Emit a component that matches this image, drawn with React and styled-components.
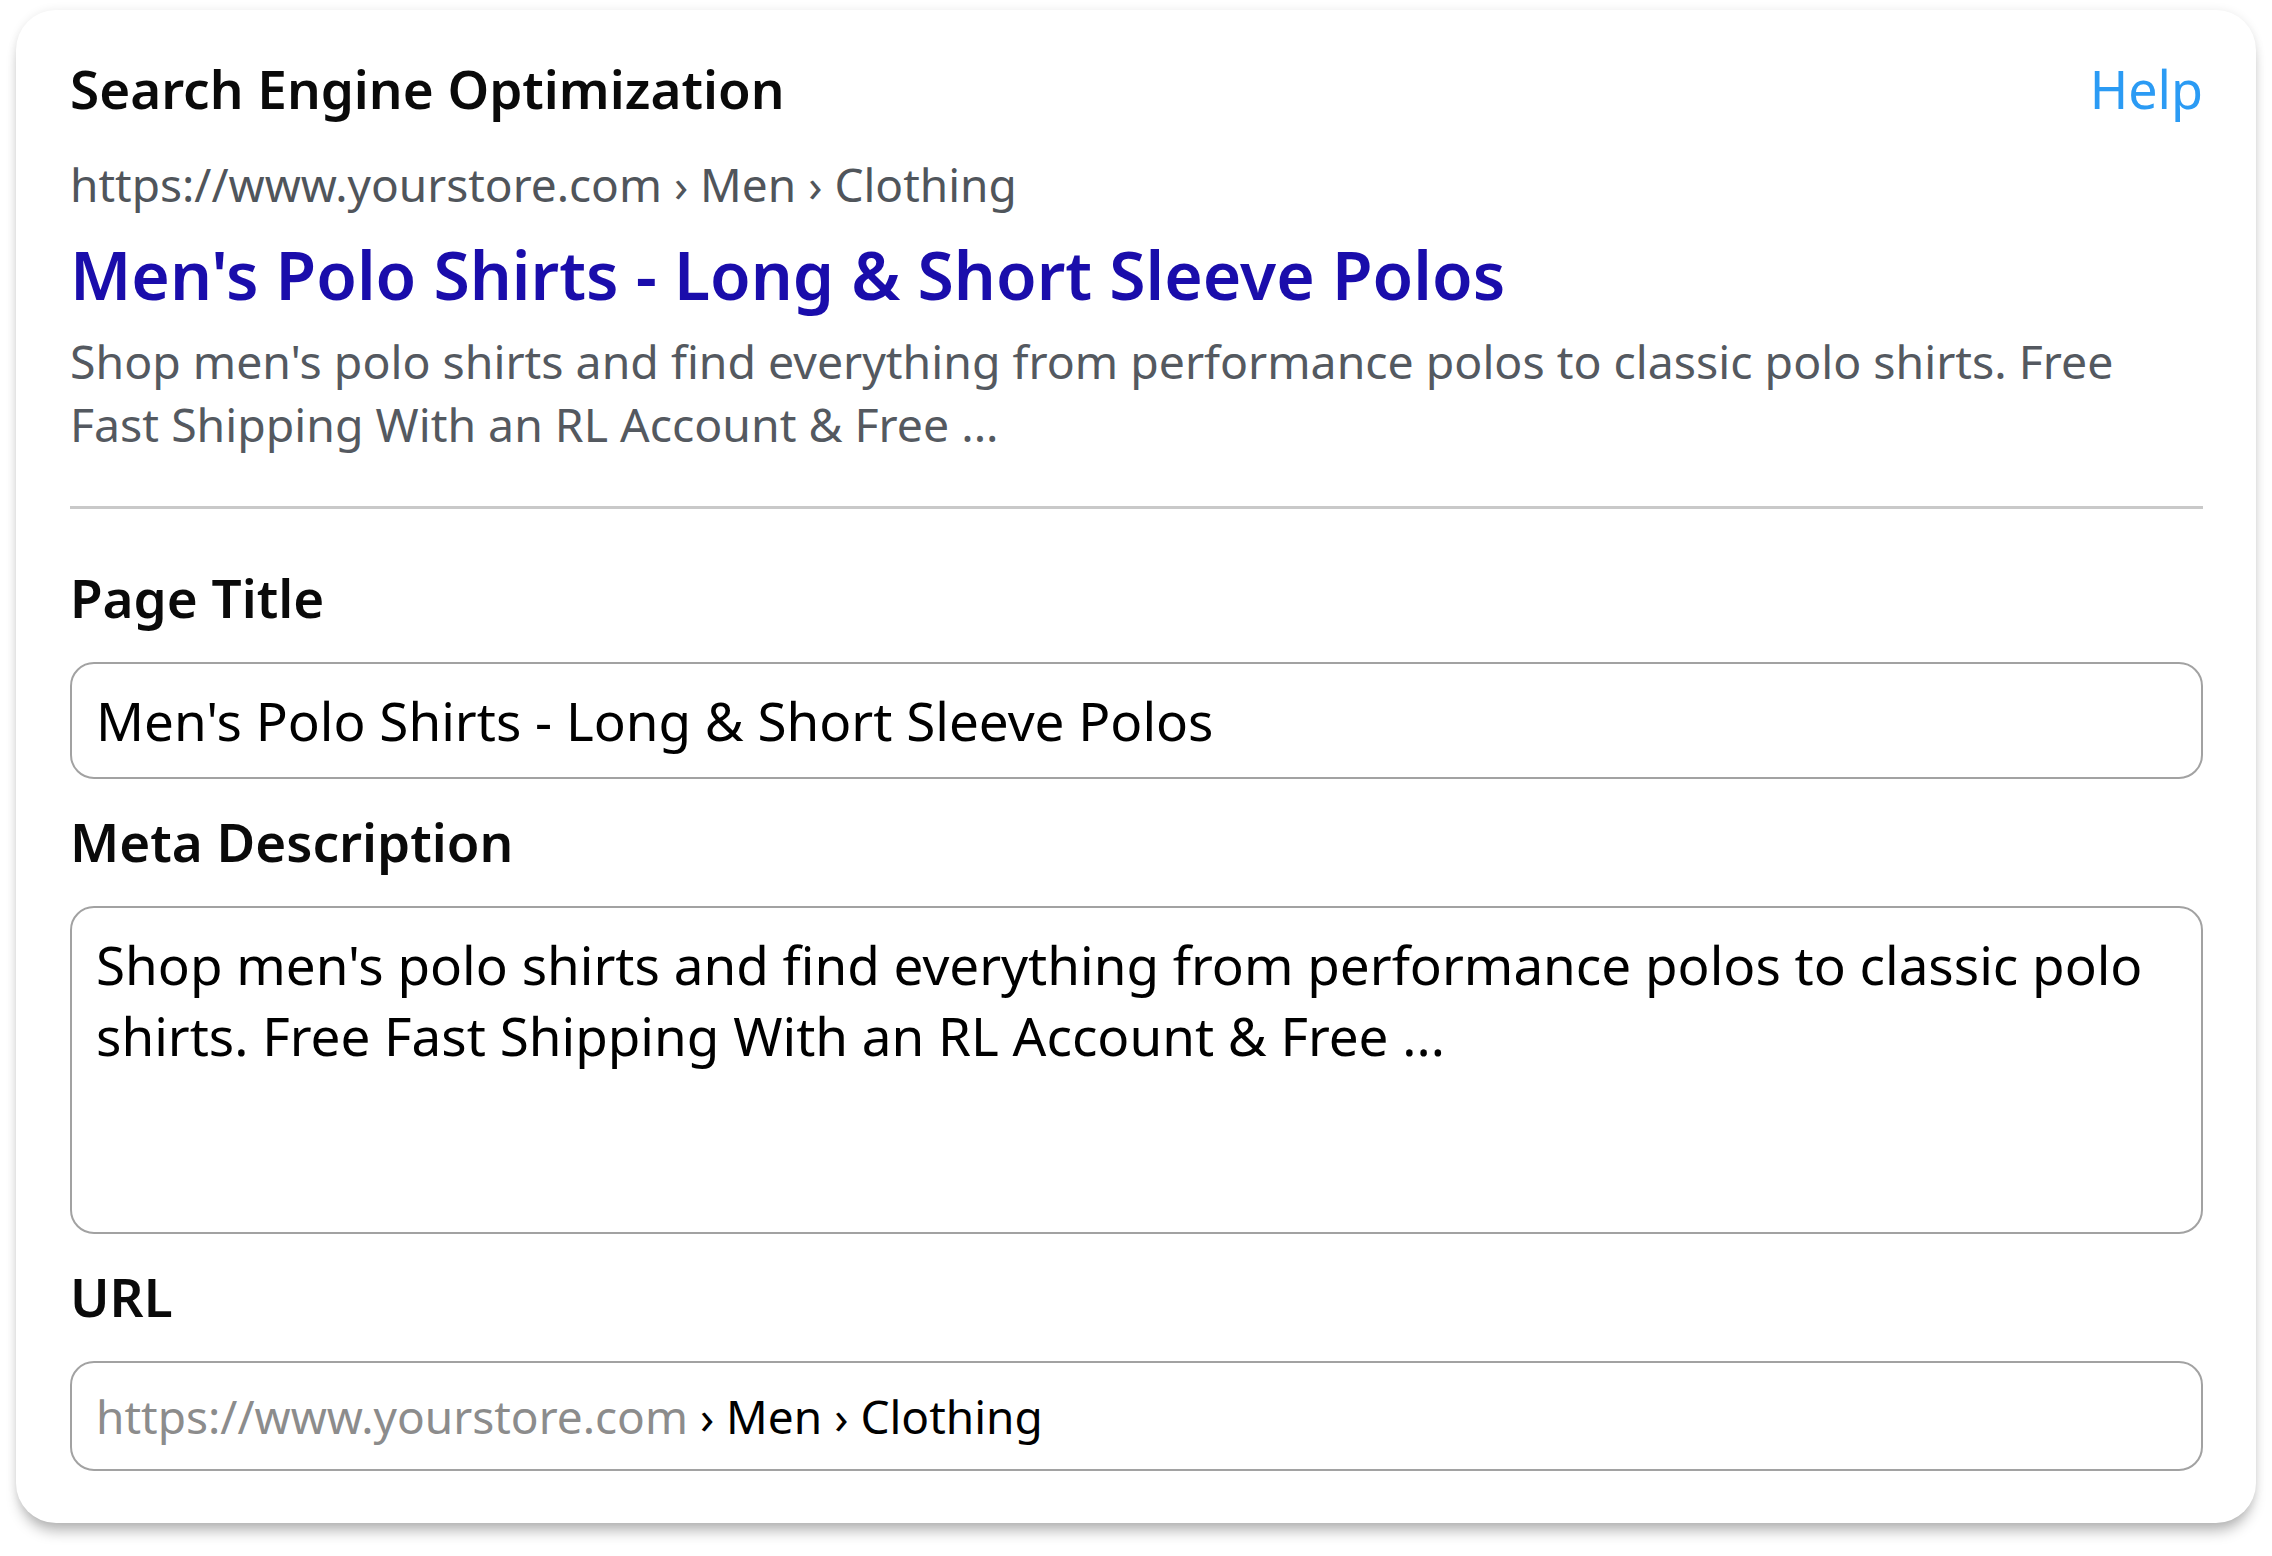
import styled, { createGlobalStyle } from 'styled-components';

const GlobalStyle = createGlobalStyle`
  html, body {
    margin: 0;
    padding: 0;
    background: #ffffff;
  }
  body {
    font-family: "Noto Sans", "Open Sans", sans-serif;
    color: #000;
  }
`;

const App = () => {
  return (
    <>
      <GlobalStyle />
      <Page>
        <Card>
          <Header>
            <Heading>Search Engine Optimization</Heading>
            <HelpLink href="#">Help</HelpLink>
          </Header>
          <Preview>
            <Crumbs>https://www.yourstore.com › Men › Clothing</Crumbs>
            <ResultTitle>Men's Polo Shirts - Long &amp; Short Sleeve Polos</ResultTitle>
            <ResultText>
              Shop men's polo shirts and find everything from performance polos to classic polo
              shirts. Free Fast Shipping With an RL Account &amp; Free ...
            </ResultText>
          </Preview>
          <Divider />
          <Fields>
            <Field>
              <Label>Page Title</Label>
              <TextInput
                type="text"
                readOnly
                value="Men's Polo Shirts - Long & Short Sleeve Polos"
              />
            </Field>
            <Field>
              <Label>Meta Description</Label>
              <TextArea
                readOnly
                value="Shop men's polo shirts and find everything from performance polos to classic polo shirts. Free Fast Shipping With an RL Account & Free ..."
              />
            </Field>
            <Field>
              <Label>URL</Label>
              <UrlBox>
                <Muted>https://www.yourstore.com</Muted> › Men › Clothing
              </UrlBox>
            </Field>
          </Fields>
        </Card>
      </Page>
    </>
  );
};
export default App;

const Page = styled.div`
  padding: 10px 16px 30px;
`;

const Card = styled.div`
  background: #fff;
  border-radius: 40px;
  padding: 42px 53px 52px 54px;
  box-shadow: 0 12px 14px -4px rgba(0, 0, 0, 0.28), 0 0 10px rgba(0, 0, 0, 0.08);
`;

const Header = styled.div`
  display: flex;
  justify-content: space-between;
  align-items: baseline;
`;

const Heading = styled.h2`
  margin: 0;
  font-size: 53px;
  font-weight: 600;
  line-height: normal;
  color: #0a0a0a;
`;

const HelpLink = styled.a`
  font-size: 52px;
  color: #2b9bf4;
  text-decoration: none;
`;

const Preview = styled.div`
  display: flex;
  flex-direction: column;
  margin-top: 28px;
`;

const Crumbs = styled.div`
  font-size: 46px;
  line-height: normal;
  color: #50555b;
`;

const ResultTitle = styled.div`
  margin-top: 14px;
  font-size: 66px;
  font-weight: 600;
  line-height: normal;
  color: #1a0dab;
`;

const ResultText = styled.p`
  margin: 11px 0 0;
  max-width: 2090px;
  font-size: 46.4px;
  line-height: 63px;
  color: #545960;
`;

const Divider = styled.hr`
  margin: 50px 0 0;
  border: 0;
  height: 3px;
  background: #c9c9c9;
`;

const Fields = styled.div`
  display: flex;
  flex-direction: column;
  gap: 26px;
  margin-top: 52px;
`;

const Field = styled.div`
  display: flex;
  flex-direction: column;
  gap: 28px;
`;

const Label = styled.label`
  font-size: 53px;
  font-weight: 600;
  line-height: normal;
  color: #0a0a0a;
`;

const fieldBox = `
  box-sizing: border-box;
  width: 100%;
  margin: 0;
  border: 2px solid #a2a2a2;
  border-radius: 24px;
  background: #fff;
  color: #000;
  font-family: "Noto Sans", "Open Sans", sans-serif;
  outline: none;
`;

const TextInput = styled.input`
  ${fieldBox}
  height: 117px;
  padding: 0 24px;
  font-size: 53px;
`;

const TextArea = styled.textarea`
  ${fieldBox}
  display: block;
  height: 328px;
  padding: 21px 24px;
  font-size: 53px;
  line-height: 71px;
  resize: none;
  overflow: hidden;
`;

const UrlBox = styled.div`
  ${fieldBox}
  height: 110px;
  padding: 0 24px;
  display: flex;
  align-items: center;
  font-size: 46px;
  white-space: pre;
`;

const Muted = styled.span`
  color: #8c8c8c;
`;
